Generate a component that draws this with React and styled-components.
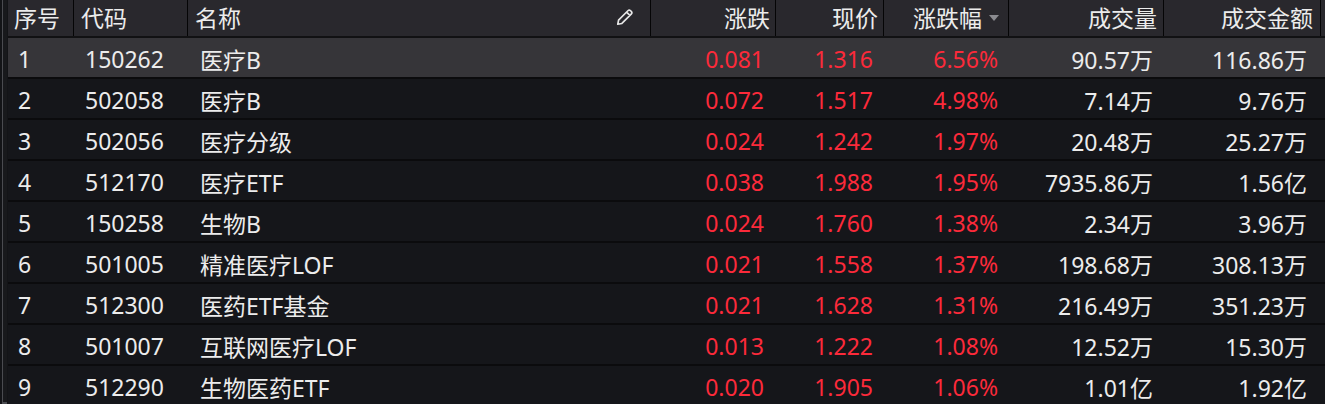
import React from "react";
import styled, { createGlobalStyle } from "styled-components";

const GlobalStyle = createGlobalStyle`
  html, body {
    margin: 0;
    padding: 0;
    background: #131417;
  }
  body {
    font-family: "Noto Sans", "Noto Sans CJK SC", sans-serif;
    -webkit-font-smoothing: antialiased;
  }
`;

const columns = [
  { key: "idx", label: "序号", width: 66, align: "left", hpad: 6, pad: 10 },
  { key: "code", label: "代码", width: 114, align: "left", hpad: 7, pad: 11 },
  { key: "name", label: "名称", width: 463, align: "left", hpad: 7, pad: 12 },
  { key: "chg", label: "涨跌", width: 125, align: "right", hpad: 5, pad: 12, red: true },
  { key: "price", label: "现价", width: 108, align: "right", hpad: 5, pad: 11, red: true },
  { key: "pct", label: "涨跌幅", width: 125, align: "right", hpad: 9, pad: 11, red: true },
  { key: "vol", label: "成交量", width: 155, align: "right", hpad: 6, pad: 11 },
  { key: "amt", label: "成交金额", width: 157, align: "right", hpad: 7, pad: 14 },
];

const rows = [
  ["1", "150262", "医疗B", "0.081", "1.316", "6.56%", "90.57万", "116.86万"],
  ["2", "502058", "医疗B", "0.072", "1.517", "4.98%", "7.14万", "9.76万"],
  ["3", "502056", "医疗分级", "0.024", "1.242", "1.97%", "20.48万", "25.27万"],
  ["4", "512170", "医疗ETF", "0.038", "1.988", "1.95%", "7935.86万", "1.56亿"],
  ["5", "150258", "生物B", "0.024", "1.760", "1.38%", "2.34万", "3.96万"],
  ["6", "501005", "精准医疗LOF", "0.021", "1.558", "1.37%", "198.68万", "308.13万"],
  ["7", "512300", "医药ETF基金", "0.021", "1.628", "1.31%", "216.49万", "351.23万"],
  ["8", "501007", "互联网医疗LOF", "0.013", "1.222", "1.08%", "12.52万", "15.30万"],
  ["9", "512290", "生物医药ETF", "0.020", "1.905", "1.06%", "1.01亿", "1.92亿"],
];

function PencilIcon() {
  return (
    <svg width="20" height="20" viewBox="0 0 18 18" fill="none">
      <path
        d="M2.5 15.5 L3.2 11.8 L11.6 3.4 a1.7 1.7 0 0 1 2.4 0 l0.6 0.6 a1.7 1.7 0 0 1 0 2.4 L6.2 14.8 Z M10.4 4.6 L13.4 7.6"
        stroke="#e6e6e6"
        strokeWidth="1.5"
        strokeLinejoin="round"
      />
    </svg>
  );
}

export default function App() {
  return (
    <>
      <GlobalStyle />
      <Page>
        <Gutter />
        <Table>
          <HeaderRow>
            {columns.map((col) => (
              <HeadCell key={col.key} $width={col.width} $align={col.align} $pad={col.hpad}>
                {col.key === "name" ? (
                  <>
                    <span>{col.label}</span>
                    <EditButton><PencilIcon /></EditButton>
                  </>
                ) : col.key === "pct" ? (
                  <>
                    <span>{col.label}</span>
                    <SortArrow />
                  </>
                ) : (
                  col.label
                )}
              </HeadCell>
            ))}
            <HeadFill />
          </HeaderRow>
          {rows.map((row, r) => (
            <Row key={row[1]} $selected={r === 0}>
              {columns.map((col, i) => (
                <Cell key={col.key} $width={col.width} $align={col.align} $pad={col.pad} $red={col.red}>
                  {row[i]}
                </Cell>
              ))}
            </Row>
          ))}
        </Table>
      </Page>
    </>
  );
}

const Page = styled.div`
  display: flex;
  width: 1325px;
  height: 404px;
  overflow: hidden;
  background: #131417;
`;

const Gutter = styled.div`
  width: 4px;
  margin-left: 2px;
  margin-right: 1px;
  border-left: 1px solid #4a4b50;
  border-bottom: 2px solid #4a4b50;
  background: #18191c;
  flex-shrink: 0;
`;

const Table = styled.div`
  flex: 1;
  display: flex;
  flex-direction: column;
  border-bottom: 2px solid #4a4b50;
`;

const HeaderRow = styled.div`
  display: flex;
  height: 36px;
  background: #29282d;
  border-bottom: 2px solid #111113;
  flex-shrink: 0;
`;

const HeadCell = styled.div`
  width: ${(p) => p.$width}px;
  flex-shrink: 0;
  box-sizing: border-box;
  display: flex;
  align-items: center;
  justify-content: ${(p) => (p.$align === "right" ? "flex-end" : "flex-start")};
  padding: 0 ${(p) => (p.$align === "right" ? p.$pad : 0)}px 2px ${(p) => (p.$align === "left" ? p.$pad : 0)}px;
  border-right: 1px solid #050506;
  color: #ececec;
  font-size: 23px;
  white-space: nowrap;
`;

const HeadFill = styled.div`
  flex: 1;
`;

const EditButton = styled.span`
  display: flex;
  margin-left: auto;
  margin-right: 15px;
`;

const SortArrow = styled.span`
  width: 0;
  height: 0;
  margin-left: 7px;
  margin-top: 2px;
  border-left: 5px solid transparent;
  border-right: 5px solid transparent;
  border-top: 6px solid #8b8b90;
`;

const Row = styled.div`
  display: flex;
  height: 39px;
  background: ${(p) => (p.$selected ? "#363539" : "#15161a")};
  border-bottom: 2px solid #0b0b0d;
  flex-shrink: 0;
`;

const Cell = styled.div`
  width: ${(p) => p.$width}px;
  flex-shrink: 0;
  box-sizing: border-box;
  display: flex;
  align-items: center;
  justify-content: ${(p) => (p.$align === "right" ? "flex-end" : "flex-start")};
  padding: 2px ${(p) => (p.$align === "right" ? p.$pad : 0)}px 0 ${(p) => (p.$align === "left" ? p.$pad : 0)}px;
  color: ${(p) => (p.$red ? "#fc2a3a" : "#ececec")};
  font-size: 23px;
  white-space: nowrap;
`;
